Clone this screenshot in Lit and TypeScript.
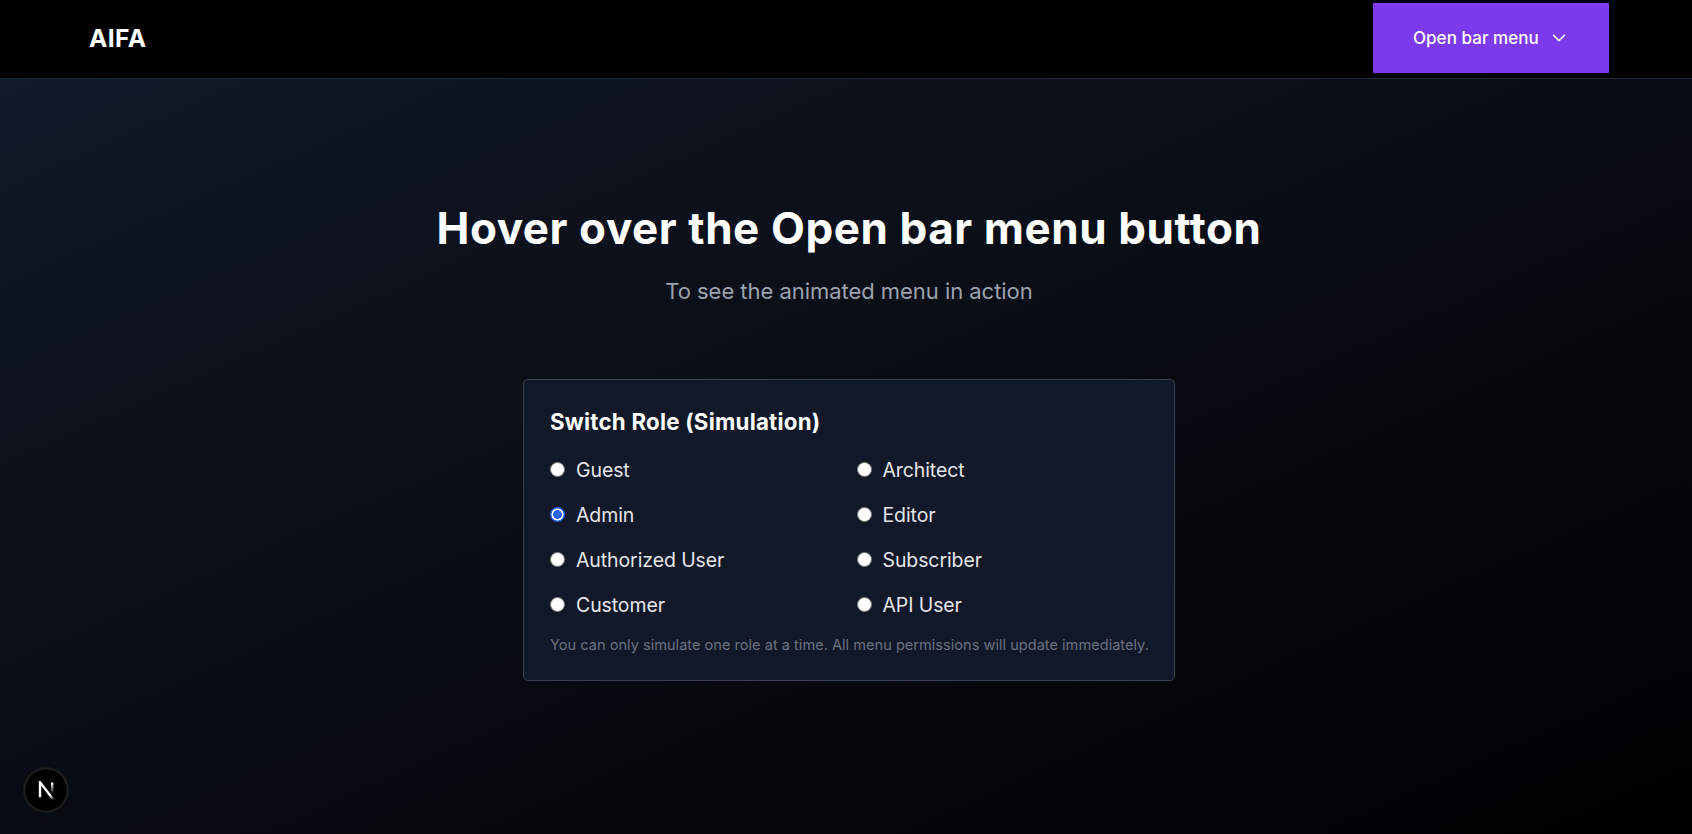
import { LitElement, html, css, svg } from "lit";
import { customElement, state } from "lit/decorators.js";

const ROLES = [
  "Guest", "Architect",
  "Admin", "Editor",
  "Authorized User", "Subscriber",
  "Customer", "API User",
];

@customElement("site-header")
export class SiteHeader extends LitElement {
  static styles = css`
    :host {
      display: flex;
      align-items: center;
      justify-content: space-between;
      box-sizing: border-box;
      height: 79px;
      padding: 3px 83px 5px 89px;
      background: #000;
      border-bottom: 1px solid #1f2937;
    }
    .logo {
      color: #fff;
      font-size: 24.6px;
      font-weight: 700;
      line-height: 35px;
      letter-spacing: 0.4px;
    }
    .menu {
      display: flex;
      align-items: center;
      gap: 11px;
      box-sizing: border-box;
      width: 236px;
      height: 70px;
      padding: 0 40px;
      border: 0;
      background: #7c3aed;
      color: #fff;
      font: 500 17px/25px Inter, sans-serif;
      letter-spacing: 0.04px;
      white-space: nowrap;
    }
    .chevron { flex: none; display: block; }
  `;
  render() {
    return html`
      <span class="logo">AIFA</span>
      <button class="menu">
        <span>Open bar menu</span>
        <svg class="chevron" width="18" height="18" viewBox="0 0 18 18" fill="none">
          <path d="M3.6 6.4 9 11.8l5.4-5.4" stroke="#fff" stroke-width="1.5" stroke-linecap="round" stroke-linejoin="round" />
        </svg>
      </button>
    `;
  }
}

@customElement("role-switcher")
export class RoleSwitcher extends LitElement {
  static styles = css`
    :host {
      display: block;
      box-sizing: border-box;
      width: 652px;
      padding: 24px 26px 25px 26px;
      border: 1px solid #374151;
      border-radius: 5px;
      background: #111827;
    }
    .title {
      margin: 0 0 16px;
      color: #fff;
      font-size: 22.3px;
      font-weight: 700;
      line-height: 35px;
      letter-spacing: 0.23px;
    }
    .grid {
      display: grid;
      grid-template-columns: 1fr 1fr;
      gap: 15px;
    }
    .option {
      display: flex;
      align-items: center;
      gap: 11px;
      height: 30px;
      color: #e5e7eb;
      font-size: 19.5px;
      line-height: 30px;
      letter-spacing: -0.1px;
    }
    .radio {
      appearance: none;
      flex: none;
      box-sizing: border-box;
      width: 15px;
      height: 15px;
      margin: 0 0 2px;
      border: 1px solid #767676;
      border-radius: 50%;
      background: #fff;
    }
    .radio:checked {
      border: 0;
      background: radial-gradient(circle, #2563eb 4.1px, #fff 4.7px, #fff 5.7px, #2563eb 6.3px);
    }
    .note {
      margin: 15px 0 0;
      color: #6b7280;
      font-size: 14.6px;
      line-height: 20px;
      white-space: nowrap;
    }
  `;
  @state() private role = "Admin";
  render() {
    return html`
      <h2 class="title">Switch Role (Simulation)</h2>
      <div class="grid">
        ${ROLES.map(
          (r) => html`<label class="option">
            <input class="radio" type="radio" name="role" .checked=${r === this.role} @change=${() => (this.role = r)} />
            <span>${r}</span>
          </label>`
        )}
      </div>
      <p class="note">You can only simulate one role at a time. All menu permissions will update immediately.</p>
    `;
  }
}

@customElement("dev-badge")
export class DevBadge extends LitElement {
  static styles = css`
    :host {
      display: flex;
      align-items: center;
      justify-content: center;
      width: 44px;
      height: 44px;
      border-radius: 50%;
      background: #000;
      box-shadow: 0 0 0 1.25px #171717, inset 0 0 0 1.25px rgba(255, 255, 255, 0.14), 0 16px 32px -8px rgba(0, 0, 0, 0.24);
    }
    .mark { display: block; }
  `;
  render() {
    return html`<svg class="mark" width="18" height="18" viewBox="0 0 14 14" fill="none">
      ${svg`<defs>
        <linearGradient id="diag" gradientUnits="userSpaceOnUse" x1="9.95" y1="11.1" x2="13.2" y2="15.2">
          <stop stop-color="#fff" /><stop offset="0.75" stop-color="#fff" stop-opacity="0.25" /><stop offset="1" stop-color="#fff" stop-opacity="0" />
        </linearGradient>
        <linearGradient id="bar" gradientUnits="userSpaceOnUse" x1="11.8" y1="1.5" x2="11.8" y2="10.2">
          <stop stop-color="#fff" /><stop offset="1" stop-color="#fff" stop-opacity="0" />
        </linearGradient>
      </defs>
      <path d="M13.3 15.2 2.34 1V12.6" stroke="url(#diag)" stroke-width="1.86" />
      <path d="M11.825 1.2V10.2" stroke="url(#bar)" stroke-width="1.86" />`}
    </svg>`;
  }
}

@customElement("app-root")
export class AppRoot extends LitElement {
  static styles = css`
    :host {
      display: flex;
      flex-direction: column;
      box-sizing: border-box;
      position: relative;
      height: 834px;
      background: #000;
      color: #fff;
      font-family: Inter, sans-serif;
    }
    .main {
      display: flex;
      flex: 1;
      flex-direction: column;
      align-items: center;
      padding: 124px 0 0 6px;
      background: linear-gradient(to bottom right, #111827, #000);
    }
    .heading {
      margin: 0 0 21px;
      font-size: 44px;
      font-weight: 700;
      line-height: 50px;
      letter-spacing: 0.58px;
    }
    .sub {
      margin: 0 0 70px;
      color: #9ca3af;
      font-size: 22px;
      line-height: 35px;
      letter-spacing: -0.04px;
    }
    .badge {
      position: absolute;
      left: 24px;
      bottom: 22px;
    }
  `;
  render() {
    return html`
      <site-header></site-header>
      <main class="main">
        <h1 class="heading">Hover over the Open bar menu button</h1>
        <p class="sub">To see the animated menu in action</p>
        <role-switcher></role-switcher>
      </main>
      <dev-badge class="badge"></dev-badge>
    `;
  }
}
